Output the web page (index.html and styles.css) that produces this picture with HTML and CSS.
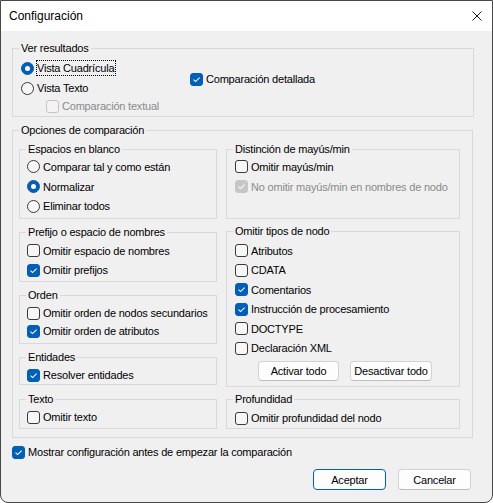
FILE: index.html
```html
<!DOCTYPE html>
<html lang="es">
<head>
<meta charset="utf-8">
<title>Configuración</title>
<link rel="stylesheet" href="styles.css">
</head>
<body>
<div class="window">
  <div class="titlebar">
    <span class="title">Configuración</span>
    <svg class="close" width="10" height="10" viewBox="0 0 10 10"><path d="M0.5 0.5L9.5 9.5M9.5 0.5L0.5 9.5" stroke="#1a1a1a" stroke-width="1" fill="none"/></svg>
  </div>
  <div class="content">
    <fieldset class="group g-ver">
      <legend>Ver resultados</legend>
      <div class="ver-row">
        <div class="ver-left">
          <div class="opt r1"><span class="radio on"></span><span class="lbl focus">Vista Cuadrícula</span></div>
          <div class="opt r2"><span class="radio"></span><span class="lbl">Vista Texto</span></div>
          <div class="opt r3 disabled"><span class="check"></span><span class="lbl">Comparación textual</span></div>
        </div>
        <div class="ver-right">
          <div class="opt r2"><span class="check on"><svg viewBox="0 0 13 13"><polyline points="3.5,6.6 5.6,8.6 9.6,4.6"/></svg></span><span class="lbl">Comparación detallada</span></div>
        </div>
      </div>
    </fieldset>

    <fieldset class="group g-opc">
      <legend>Opciones de comparación</legend>
      <div class="cols">
        <div class="col col-left">
          <fieldset class="group g-esp">
            <legend>Espacios en blanco</legend>
            <div class="list">
              <div class="opt"><span class="radio"></span><span class="lbl">Comparar tal y como están</span></div>
              <div class="opt"><span class="radio on"></span><span class="lbl">Normalizar</span></div>
              <div class="opt"><span class="radio"></span><span class="lbl">Eliminar todos</span></div>
            </div>
          </fieldset>
          <fieldset class="group g-pre">
            <legend>Prefijo o espacio de nombres</legend>
            <div class="list">
              <div class="opt"><span class="check"></span><span class="lbl">Omitir espacio de nombres</span></div>
              <div class="opt"><span class="check on"><svg viewBox="0 0 13 13"><polyline points="3.5,6.6 5.6,8.6 9.6,4.6"/></svg></span><span class="lbl">Omitir prefijos</span></div>
            </div>
          </fieldset>
          <fieldset class="group g-ord">
            <legend>Orden</legend>
            <div class="list">
              <div class="opt"><span class="check"></span><span class="lbl">Omitir orden de nodos secundarios</span></div>
              <div class="opt"><span class="check on"><svg viewBox="0 0 13 13"><polyline points="3.5,6.6 5.6,8.6 9.6,4.6"/></svg></span><span class="lbl">Omitir orden de atributos</span></div>
            </div>
          </fieldset>
          <fieldset class="group g-ent">
            <legend>Entidades</legend>
            <div class="list">
              <div class="opt"><span class="check on"><svg viewBox="0 0 13 13"><polyline points="3.5,6.6 5.6,8.6 9.6,4.6"/></svg></span><span class="lbl">Resolver entidades</span></div>
            </div>
          </fieldset>
          <fieldset class="group g-txt">
            <legend>Texto</legend>
            <div class="list">
              <div class="opt"><span class="check"></span><span class="lbl">Omitir texto</span></div>
            </div>
          </fieldset>
        </div>
        <div class="col col-right">
          <fieldset class="group g-may">
            <legend>Distinción de mayús/min</legend>
            <div class="list">
              <div class="opt"><span class="check"></span><span class="lbl">Omitir mayús/min</span></div>
              <div class="opt disabled"><span class="check on"><svg viewBox="0 0 13 13"><polyline points="3.5,6.6 5.6,8.6 9.6,4.6"/></svg></span><span class="lbl">No omitir mayús/min en nombres de nodo</span></div>
            </div>
          </fieldset>
          <fieldset class="group g-tip">
            <legend>Omitir tipos de nodo</legend>
            <div class="list">
              <div class="opt"><span class="check"></span><span class="lbl">Atributos</span></div>
              <div class="opt"><span class="check"></span><span class="lbl">CDATA</span></div>
              <div class="opt"><span class="check on"><svg viewBox="0 0 13 13"><polyline points="3.5,6.6 5.6,8.6 9.6,4.6"/></svg></span><span class="lbl">Comentarios</span></div>
              <div class="opt"><span class="check on"><svg viewBox="0 0 13 13"><polyline points="3.5,6.6 5.6,8.6 9.6,4.6"/></svg></span><span class="lbl">Instrucción de procesamiento</span></div>
              <div class="opt"><span class="check"></span><span class="lbl">DOCTYPE</span></div>
              <div class="opt"><span class="check"></span><span class="lbl">Declaración XML</span></div>
            </div>
            <div class="btnrow">
              <div class="btn b-act">Activar todo</div>
              <div class="btn b-des">Desactivar todo</div>
            </div>
          </fieldset>
          <fieldset class="group g-pro">
            <legend>Profundidad</legend>
            <div class="list">
              <div class="opt"><span class="check"></span><span class="lbl">Omitir profundidad del nodo</span></div>
            </div>
          </fieldset>
        </div>
      </div>
    </fieldset>

    <div class="opt show"><span class="check on"><svg viewBox="0 0 13 13"><polyline points="3.5,6.6 5.6,8.6 9.6,4.6"/></svg></span><span class="lbl">Mostrar configuración antes de empezar la comparación</span></div>

    <div class="footer">
      <div class="btn b-dlg default">Aceptar</div>
      <div class="btn b-dlg">Cancelar</div>
    </div>
  </div>
</div>
</body>
</html>
```

FILE: styles.css
```css
* { box-sizing: border-box; }
html, body { margin: 0; padding: 0; }
body {
  width: 493px;
  height: 503px;
  overflow: hidden;
  background: #ffffff;
  font-family: "Liberation Sans", Arial, sans-serif;
  font-size: 11px;
  letter-spacing: -0.2px;
  color: #000;
}
.window {
  width: 493px;
  height: 503px;
  border: 1px solid #474747;
  border-radius: 0 0 8px 8px;
  overflow: hidden;
  display: flex;
  flex-direction: column;
  background: #f0f0f0;
}
.titlebar {
  flex: none;
  height: 30px;
  background: #ffffff;
  display: flex;
  align-items: center;
  justify-content: space-between;
  padding: 0 10px 0 8px;
}
.title {
  font-size: 12px;
  letter-spacing: 0;
  line-height: 30px;
  color: #000;
}
.close { display: block; }
.content {
  flex: 1;
  display: flex;
  flex-direction: column;
  padding: 10px 0 0 11px;
}

/* group boxes */
fieldset.group {
  margin: 0;
  padding: 0;
  border: 1px solid #d9d9d9;
  min-width: 0;
  flex: none;
}
legend {
  padding: 0 2px;
  margin-left: 6px;
  height: 15px;
  line-height: 15px;
}
.g-ver { width: 462px; height: 76px; margin-bottom: 6px !important; }
.g-opc { width: 461px; height: 315px; }

.ver-row { display: flex; margin-top: 2px; }
.ver-left { margin-left: 8px; width: 169px; }
.ver-right { padding-top: 11px; }
.r1, .r2 { height: 20px; }
.r3 { height: 16px; padding-left: 25px; }

.cols {
  display: flex;
  gap: 9px;
  padding-left: 6px;
  margin-top: 4px;
}
.col { display: flex; flex-direction: column; }
.col-left { width: 198px; }
.col-right { width: 234px; }

.g-esp { height: 77px; }
.g-pre { height: 57px; margin-top: 6px !important; }
.g-ord { height: 56px; margin-top: 6px !important; }
.g-ent { height: 35px; margin-top: 6px !important; }
.g-txt { height: 37px; margin-top: 7px !important; }
.g-may { height: 77px; }
.g-tip { height: 163px; margin-top: 5px !important; }
.g-pro { height: 37px; margin-top: 5px !important; }

.col-left .list { padding-left: 7px; }
.col-right .list { padding-left: 8px; }

.g-esp .opt, .g-may .opt { height: 19.7px; }
.g-pre .list { margin-top: 1px; }
.g-pre .opt { height: 19.5px; }
.g-ord .list { margin-top: 1px; }
.g-ord .opt { height: 18px; }
.g-ent .list, .g-txt .list { margin-top: 1px; }
.g-ent .opt, .g-txt .opt { height: 18px; }
.g-pro .list { margin-top: 2px; }
.g-pro .opt { height: 18px; }
.g-tip .list { margin-top: 2px; }
.g-tip .opt { height: 19.5px; }

/* option rows */
.opt {
  display: flex;
  align-items: center;
  white-space: nowrap;
}
.lbl { margin-left: 3px; }
.lbl.focus {
  margin-left: 2px;
  height: 16px;
  line-height: 14px;
  padding: 0 1px 0 0;
  border: 1px dotted #000;
}
.disabled .lbl { color: #8a8a8a; }

.check, .radio {
  flex: none;
  width: 13px;
  height: 13px;
  border: 1px solid #3a3a3a;
  background: #f7f7f7;
  display: flex;
  align-items: center;
  justify-content: center;
}
.check { border-radius: 3px; }
.radio { border-radius: 50%; }
.check svg { width: 13px; height: 13px; flex: none; }
.check polyline { fill: none; stroke: #ffffff; stroke-width: 1.1; }
.check.on {
  background: #005fb8;
  border-color: #005fb8;
}
.radio.on {
  background: #005fb8;
  border-color: #005fb8;
}
.radio.on::after {
  content: "";
  width: 5px;
  height: 5px;
  border-radius: 50%;
  background: #ffffff;
}
.disabled .check { border-color: #c4c4c4; background: #f4f4f4; }
.disabled .check.on { background: #c6c6c6; border-color: #c6c6c6; }

/* buttons */
.btn {
  display: flex;
  align-items: center;
  justify-content: center;
  background: #fdfdfd;
  border: 1px solid #d2d2d2;
  border-bottom-color: #bdbdbd;
  border-radius: 4px;
  color: #000;
  white-space: nowrap;
}
.btnrow {
  display: flex;
  gap: 11px;
  margin: 3px 0 0 31px;
}
.b-act { width: 81px; height: 20px; }
.b-des { width: 82px; height: 20px; }

.show {
  height: 18px;
  margin-top: 5px;
}
.show .lbl { margin-left: 3px; }

.footer {
  display: flex;
  justify-content: flex-end;
  gap: 12px;
  margin: 8px 21px 0 0;
}
.b-dlg { width: 73px; height: 21px; }
.btn.default { border-color: #005fb8; }
```
